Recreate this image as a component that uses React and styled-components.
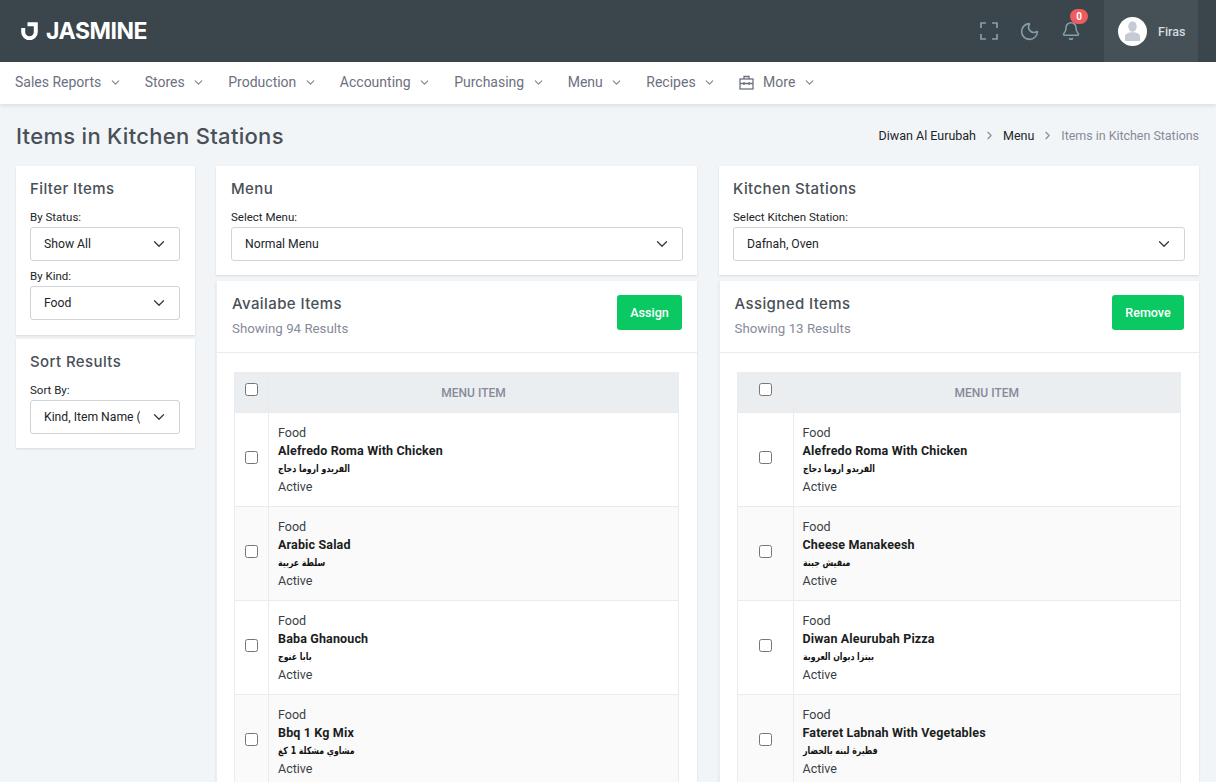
import React from "react";
import styled, { createGlobalStyle } from "styled-components";
import { Moon, Bell, ChevronDown, ChevronRight } from "lucide-react";

const GlobalStyle = createGlobalStyle`
  html, body {
    margin: 0;
    height: 100%;
    overflow: hidden;
    background: #f2f5f8;
    font-family: Roboto, "Liberation Sans", sans-serif;
    color: #212529;
  }
  * { box-sizing: border-box; }
`;

const Page = styled.div`
  height: 782px;
  overflow: hidden;
`;

const TopBar = styled.header`
  height: 62px;
  background: #3a464c;
  display: flex;
  align-items: center;
  justify-content: space-between;
  padding: 0 18px 0 21px;
`;

const Logo = styled.div`
  display: flex;
  align-items: center;
  gap: 8px;
  color: #fff;
  font-family: Inter, sans-serif;
  font-size: 23px;
  font-weight: 700;
  letter-spacing: -0.45px;
`;

const TopRight = styled.div`
  display: flex;
  align-items: center;
  height: 100%;
`;

const TopIcon = styled.div`
  position: relative;
  width: 41px;
  display: flex;
  justify-content: center;
  color: #85a0ad;
`;

const Badge = styled.span`
  position: absolute;
  top: -12px;
  left: 20px;
  width: 18px;
  height: 15px;
  border-radius: 8px;
  background: #ef5b5f;
  color: #fff;
  font-size: 10px;
  font-weight: 700;
  line-height: 15px;
  text-align: center;
`;

const Profile = styled.div`
  height: 100%;
  width: 94px;
  margin-left: 13px;
  background: #465157;
  display: flex;
  align-items: center;
  gap: 11px;
  padding-left: 14px;
  color: #d5dbdf;
  font-size: 12.5px;
  font-weight: 500;
`;

const Avatar = styled.div`
  width: 29px;
  height: 29px;
  border-radius: 50%;
  background: #fff;
  display: flex;
  align-items: center;
  justify-content: center;
`;

const NavBar = styled.nav`
  height: 42px;
  background: #fff;
  box-shadow: 0 2px 4px rgba(15, 34, 58, 0.1);
  display: flex;
  align-items: center;
  padding: 0 0 2px 15px;
  gap: 23px;
`;

const NavItem = styled.div`
  display: flex;
  align-items: center;
  color: #6d7080;
  font-size: 14px;
  svg.chev {
    margin-left: 7.5px;
    color: #80838f;
  }
  svg.lead {
    margin-right: 9px;
  }
`;

const TitleRow = styled.div`
  display: flex;
  align-items: center;
  justify-content: space-between;
  height: 62px;
  padding: 1px 17px 0 16px;
`;

const PageTitle = styled.h1`
  margin: 0;
  font-family: Inter, sans-serif;
  font-size: 22px;
  font-weight: 500;
  letter-spacing: 0.3px;
  color: #495057;
`;

const Crumbs = styled.div`
  display: flex;
  align-items: center;
  gap: 7px;
  font-size: 12.5px;
  color: #212529;
  span:last-child {
    color: #878a99;
    letter-spacing: -0.04px;
  }
  svg {
    color: #878a99;
  }
`;

const Columns = styled.main`
  display: grid;
  grid-template-columns: 178.5px 481px 480.5px;
  column-gap: 21.5px;
  padding-left: 16px;
  align-items: start;
`;

const Stack = styled.div`
  display: flex;
  flex-direction: column;
  gap: ${(p) => p.$gap}px;
`;

const Card = styled.section`
  background: #fff;
  box-shadow: 0 1px 2px rgba(56, 65, 74, 0.15);
  padding: 14px ${(p) => p.$pr}px ${(p) => p.$pb || 14}px ${(p) => p.$pl}px;
`;

const CardTitle = styled.h4`
  margin: 0 0 12px;
  font-family: Inter, sans-serif;
  font-size: 15px;
  font-weight: 500;
  line-height: 18px;
  letter-spacing: 0.4px;
  color: #495057;
`;

const Label = styled.label`
  display: block;
  font-size: 11.5px;
  line-height: 14px;
  margin-bottom: 3px;
`;

const Select = styled.select`
  display: block;
  width: 100%;
  height: 34px;
  appearance: none;
  border: 1px solid #ced4da;
  border-radius: 3px;
  padding: 0 39px 0 13px;
  background: #fff url("data:image/svg+xml,%3csvg xmlns='http://www.w3.org/2000/svg' viewBox='0 0 16 16'%3e%3cpath fill='none' stroke='%23343a40' stroke-linecap='round' stroke-linejoin='round' stroke-width='1.7' d='m2 5 6 6 6-6'/%3e%3c/svg%3e") no-repeat right 14px center / 12px 12px;
  font-family: inherit;
  font-size: 12.2px;
  color: #212529;
  margin-bottom: ${(p) => p.$mb || 0}px;
`;

const ListCard = styled.section`
  background: #fff;
  border-left: 1px solid #eceff2;
  box-shadow: 0 1px 2px rgba(56, 65, 74, 0.15);
`;

const ListHeader = styled.div`
  height: 72px;
  border-bottom: 1px solid #e9ebec;
  display: flex;
  align-items: flex-start;
  justify-content: space-between;
  padding: 14px 15px 0 15px;
`;

const HeaderText = styled.div`
  h4 {
    margin: 0 0 8px;
    font-family: Inter, sans-serif;
    font-size: 15px;
    font-weight: 500;
    line-height: 18px;
    letter-spacing: 0.4px;
    color: #495057;
  }
  p {
    margin: 0;
    font-size: 13.3px;
    line-height: 16px;
    color: #878a99;
  }
`;

const GreenButton = styled.button`
  width: ${(p) => p.$w}px;
  height: 35px;
  border: 0;
  border-radius: 3px;
  background: #0ac963;
  color: #fff;
  font-family: inherit;
  font-size: 12.5px;
  font-weight: 500;
`;

const TableWrap = styled.div`
  padding: 19px 18px 0 17px;
`;

const Table = styled.table`
  width: 100%;
  border-collapse: collapse;
  table-layout: fixed;
  th, td {
    border: 1px solid #e9ebec;
  }
`;

const CheckCell = styled.td`
  width: ${(p) => p.$w}px;
  text-align: center;
  vertical-align: middle;
  input {
    margin: 0 0 6px;
    width: 13px;
    height: 13px;
    vertical-align: middle;
  }
`;

const HeadRow = styled.tr`
  height: 40px;
  background: #ebeef1;
  th {
    font-size: 12px;
    font-weight: 500;
    color: #878a99;
    text-align: center;
  }
`;

const ItemRow = styled.tr`
  height: 94px;
  background: ${(p) => (p.$odd ? "#fff" : "#fafafa")};
`;

const ItemCell = styled.td`
  padding: 0 9px;
  font-size: 12.5px;
  line-height: 18px;
  color: #3a3f45;
`;

const ItemName = styled.div`
  font-weight: 700;
  letter-spacing: 0.15px;
  color: #1a1d21;
`;

const ItemArabic = styled.div`
  font-family: "DejaVu Sans Condensed", "DejaVu Sans", sans-serif;
  font-stretch: condensed;
  font-size: 10px;
  font-weight: 700;
  width: fit-content;
  transform: scaleX(0.87);
  transform-origin: left center;
  color: #111;
`;

const menuItems = ["Sales Reports", "Stores", "Production", "Accounting", "Purchasing", "Menu", "Recipes"];

const available = [
  ["Alefredo Roma With Chicken", "الفريدو اروما دجاج"],
  ["Arabic Salad", "سلطة عربية"],
  ["Baba Ghanouch", "بابا غنوج"],
  ["Bbq 1 Kg Mix", "مشاوي مشكلة 1 كغ"],
];

const assigned = [
  ["Alefredo Roma With Chicken", "الفريدو اروما دجاج"],
  ["Cheese Manakeesh", "منقيش جبنة"],
  ["Diwan Aleurubah Pizza", "بيتزا ديوان العروبة"],
  ["Fateret Labnah With Vegetables", "فطيرة لبنه بالخضار"],
];

function ItemsTable({ items, checkWidth }) {
  return (
    <TableWrap>
      <Table>
        <thead>
          <HeadRow>
            <CheckCell as="th" $w={checkWidth}><input type="checkbox" /></CheckCell>
            <th>MENU ITEM</th>
          </HeadRow>
        </thead>
        <tbody>
          {items.map((item, index) => (
            <ItemRow key={item[0]} $odd={index % 2 === 0}>
              <CheckCell $w={checkWidth}><input type="checkbox" /></CheckCell>
              <ItemCell>
                <div>Food</div>
                <ItemName>{item[0]}</ItemName>
                <ItemArabic dir="rtl">{item[1]}</ItemArabic>
                <div>Active</div>
              </ItemCell>
            </ItemRow>
          ))}
        </tbody>
      </Table>
    </TableWrap>
  );
}

function SelectField({ label, value, mb }) {
  return (
    <>
      <Label>{label}</Label>
      <Select $mb={mb} defaultValue={value}>
        <option>{value}</option>
      </Select>
    </>
  );
}

function App() {
  return (
    <Page>
      <GlobalStyle />
      <TopBar>
        <Logo>
          <svg width="17" height="18" viewBox="0 0 17 18" fill="none" stroke="#fff" strokeWidth="4">
            <path d="M2.2 6 V10 A6.3 6.3 0 0 0 14.8 10 V2.2 H6.5" />
          </svg>
          JASMINE
        </Logo>
        <TopRight>
          <TopIcon>
            <svg width="18" height="18" viewBox="0 0 18 18" fill="none" stroke="currentColor" strokeWidth="1.7">
              <path d="M1 6 V1 H6 M12 1 H17 V6 M17 12 V17 H12 M6 17 H1 V12" />
            </svg>
          </TopIcon>
          <TopIcon><Moon size={21} strokeWidth={1.8} /></TopIcon>
          <TopIcon>
            <Bell size={20} strokeWidth={1.8} />
            <Badge>0</Badge>
          </TopIcon>
          <Profile>
            <Avatar>
              <svg width="17" height="20" viewBox="0 0 17 20" fill="#c6c9d6">
                <ellipse cx="8.5" cy="5.5" rx="4.2" ry="5.2" />
                <path d="M1 20 V15.5 C1 12.8 4 11.2 8.5 11.2 S16 12.8 16 15.5 V20 Z" />
              </svg>
            </Avatar>
            Firas
          </Profile>
        </TopRight>
      </TopBar>

      <NavBar>
        {menuItems.map((name) => (
          <NavItem key={name}>
            {name}
            <ChevronDown className="chev" size={13} />
          </NavItem>
        ))}
        <NavItem>
          <svg className="lead" width="15" height="15" viewBox="0 0 15 15" fill="none" stroke="currentColor" strokeWidth="1.3">
            <rect x="1" y="4" width="13" height="10" />
            <path d="M5 4 V1.5 H10 V4 M1 8.5 H14 M5 7 V10 M10 7 V10" />
          </svg>
          More
          <ChevronDown className="chev" size={13} />
        </NavItem>
      </NavBar>

      <TitleRow>
        <PageTitle>Items in Kitchen Stations</PageTitle>
        <Crumbs>
          <span>Diwan Al Eurubah</span>
          <ChevronRight size={13} />
          <span>Menu</span>
          <ChevronRight size={13} />
          <span>Items in Kitchen Stations</span>
        </Crumbs>
      </TitleRow>

      <Columns>
        <Stack $gap={4}>
          <Card $pl={14} $pr={14.5} $pb={15}>
            <CardTitle>Filter Items</CardTitle>
            <SelectField label="By Status:" value="Show All" mb={8} />
            <SelectField label="By Kind:" value="Food" />
          </Card>
          <Card $pl={14} $pr={14.5}>
            <CardTitle>Sort Results</CardTitle>
            <SelectField label="Sort By:" value="Kind, Item Name (A-Z)" />
          </Card>
        </Stack>

        <Stack $gap={6}>
          <Card $pl={15} $pr={14}>
            <CardTitle>Menu</CardTitle>
            <SelectField label="Select Menu:" value="Normal Menu" />
          </Card>
          <ListCard>
            <ListHeader>
              <HeaderText>
                <h4>Availabe Items</h4>
                <p>Showing 94 Results</p>
              </HeaderText>
              <GreenButton $w={65}>Assign</GreenButton>
            </ListHeader>
            <ItemsTable items={available} checkWidth={34} />
          </ListCard>
        </Stack>

        <Stack $gap={6}>
          <Card $pl={14.5} $pr={14}>
            <CardTitle>Kitchen Stations</CardTitle>
            <SelectField label="Select Kitchen Station:" value="Dafnah, Oven" />
          </Card>
          <ListCard>
            <ListHeader>
              <HeaderText>
                <h4>Assigned Items</h4>
                <p>Showing 13 Results</p>
              </HeaderText>
              <GreenButton $w={72}>Remove</GreenButton>
            </ListHeader>
            <ItemsTable items={assigned} checkWidth={56} />
          </ListCard>
        </Stack>
      </Columns>
    </Page>
  );
}

export default App;
